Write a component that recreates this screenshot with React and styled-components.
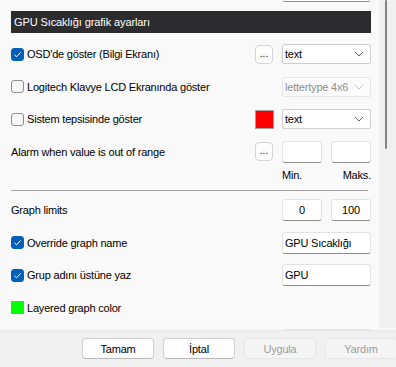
import React from 'react'
import styled, { createGlobalStyle } from 'styled-components'

const GlobalStyle = createGlobalStyle`
  html, body { margin: 0; padding: 0; }
  body {
    width: 396px;
    height: 367px;
    overflow: hidden;
    background: #f9f9f9;
    font-family: "Liberation Sans", Arial, sans-serif;
    font-size: 11px;
    letter-spacing: -0.2px;
    color: #000;
  }
`

const Window = styled.div`
  width: 396px;
  height: 367px;
  display: flex;
  flex-direction: column;
`

const ScrollArea = styled.div`
  height: 330px;
  flex: none;
  display: flex;
  overflow: hidden;
`

const Content = styled.div`
  width: 360px;
  flex: none;
  padding-left: 11px;
  margin-top: -20px;
  display: flex;
  flex-direction: column;
`

const Track = styled.div`
  margin-left: 8px;
  width: 17px;
  height: 328px;
  background: #f0f0f0;
  position: relative;
`

const Thumb = styled.div`
  position: absolute;
  left: 6px;
  top: 0;
  width: 2px;
  height: 149px;
  border-radius: 1px;
  background: #858585;
`

const Header = styled.div`
  flex: none;
  height: 22px;
  margin-top: 9px;
  margin-bottom: 4.75px;
  background: #2c2c2f;
  color: #fff;
  font-size: 11px;
  letter-spacing: -0.1px;
  display: flex;
  align-items: center;
  padding-left: 3px;
`

const Row = styled.div`
  flex: none;
  height: ${p => p.$h || 32.5}px;
  display: grid;
  grid-template-columns: 1fr 18px 89px;
  column-gap: 9px;
  align-items: center;
`

const Label = styled.label`
  display: flex;
  align-items: center;
  gap: 3px;
  white-space: nowrap;
  grid-column: 1;
`

const Box = styled.span`
  width: 13px;
  height: 13px;
  box-sizing: border-box;
  border-radius: 3px;
  display: inline-flex;
  align-items: center;
  justify-content: center;
  background: ${p => p.$checked ? '#005fb8' : '#f7f7f7'};
  border: 1px solid ${p => p.$checked ? '#005fb8' : '#8d8d8d'};
`

const Swatch = styled.span`
  grid-column: ${p => p.$col || 'auto'};
  width: ${p => p.$size || 13}px;
  height: ${p => p.$size || 13}px;
  background: ${p => p.$color};
  box-sizing: border-box;
  border: 1px solid ${p => p.$border || 'transparent'};
`

const Dots = styled.button`
  grid-column: 2;
  width: 18px;
  height: 19px;
  padding: 0 0 4px;
  border: 1px solid #d5d5d5;
  border-radius: 4px;
  background: #fdfdfd;
  color: #000;
  font: inherit;
  font-size: 10px;
  line-height: 10px;
  display: flex;
  align-items: flex-end;
  justify-content: center;
`

const Select = styled.div`
  grid-column: 3;
  height: 20px;
  box-sizing: border-box;
  border: 1px solid ${p => p.$disabled ? '#e6e6e6' : '#cfcfcf'};
  border-radius: 2px;
  background: ${p => p.$disabled ? '#fbfbfb' : '#fff'};
  color: ${p => p.$disabled ? '#8f8f8f' : '#000'};
  display: flex;
  align-items: center;
  justify-content: space-between;
  padding: 0 6px 0 2px;
  white-space: nowrap;
`

const Input = styled.div`
  grid-column: ${p => p.$col || 'auto'};
  height: 22px;
  box-sizing: border-box;
  border: 1px solid #e3e3e3;
  border-bottom-color: #8c8c8c;
  border-radius: 3px;
  background: #fff;
  display: flex;
  align-items: center;
  justify-content: ${p => p.$center ? 'center' : 'flex-start'};
  padding: 0 2px;
  white-space: nowrap;
`

const Pair = styled.div`
  grid-column: 3;
  display: grid;
  grid-template-columns: 40px 40px;
  column-gap: 9px;
`

const Captions = styled.div`
  grid-column: 3;
  display: flex;
  justify-content: space-between;
`

const Separator = styled.div`
  flex: none;
  height: 1px;
  background: #a0a0a0;
  margin: 8px 3px 3px 0;
`

const Bottom = styled.div`
  flex: 1;
  border-top: 1px solid #e8e8e8;
  background: #f0f0f0;
  display: flex;
  align-items: center;
  gap: 9px;
  padding-left: 82px;
  overflow: hidden;
`

const Button = styled.button`
  flex: none;
  width: 72px;
  height: 21px;
  border-radius: 4px;
  border: 1px solid ${p => p.$disabled ? '#e8e8e8' : '#d0d0d0'};
  border-bottom-color: ${p => p.$disabled ? '#e8e8e8' : '#b8b8b8'};
  background: ${p => p.$disabled ? '#f5f5f5' : '#fdfdfd'};
  color: ${p => p.$disabled ? '#9d9d9d' : '#000'};
  font-family: inherit;
  font-size: 11px;
  letter-spacing: -0.2px;
  padding: 0;
  margin-top: -1px;
`

const Check = () => (
  <svg width="9" height="9" viewBox="0 0 9 9">
    <path d="M1.5 4.8 L3.6 6.8 L7.6 2.4" fill="none" stroke="#fff" strokeWidth="1" />
  </svg>
)

const Chevron = ({ color }) => (
  <svg width="10" height="6" viewBox="0 0 10 6">
    <path d="M1 1 L5 5 L9 1" fill="none" stroke={color || '#606060'} strokeWidth="1" />
  </svg>
)

const CheckItem = ({ checked, children }) => (
  <Label>
    <Box $checked={checked}>{checked && <Check />}</Box>
    {children}
  </Label>
)

const App = () => {
  return (
    <Window>
      <GlobalStyle />
      <ScrollArea>
        <Content>
          <Row $h={22}>
            <Input $col={3} />
          </Row>
          <Header>GPU Sıcaklığı grafik ayarları</Header>

          <Row>
            <CheckItem checked>OSD'de göster (Bilgi Ekranı)</CheckItem>
            <Dots>...</Dots>
            <Select>text<Chevron /></Select>
          </Row>
          <Row>
            <CheckItem>Logitech Klavye LCD Ekranında göster</CheckItem>
            <Select $disabled>lettertype 4x6<Chevron color="#c4c4c4" /></Select>
          </Row>
          <Row>
            <CheckItem>Sistem tepsisinde göster</CheckItem>
            <Swatch $col={2} $color="#ff0000" $size={19} $border="#a0a0a0" />
            <Select>text<Chevron /></Select>
          </Row>
          <Row>
            <Label>Alarm when value is out of range</Label>
            <Dots>...</Dots>
            <Pair>
              <Input />
              <Input />
            </Pair>
          </Row>
          <Row $h={14}>
            <Captions>
              <span>Min.</span>
              <span>Maks.</span>
            </Captions>
          </Row>

          <Separator />

          <Row>
            <Label>Graph limits</Label>
            <Pair>
              <Input $center>0</Input>
              <Input $center>100</Input>
            </Pair>
          </Row>
          <Row>
            <CheckItem checked>Override graph name</CheckItem>
            <Input $col={3}>GPU Sıcaklığı</Input>
          </Row>
          <Row>
            <CheckItem checked>Grup adını üstüne yaz</CheckItem>
            <Input $col={3}>GPU</Input>
          </Row>
          <Row>
            <Label>
              <Swatch $color="#00ff00" />
              Layered graph color
            </Label>
          </Row>
          <Row>
            <Input $col={3} />
          </Row>
        </Content>
        <Track>
          <Thumb />
        </Track>
      </ScrollArea>
      <Bottom>
        <Button>Tamam</Button>
        <Button>İptal</Button>
        <Button $disabled>Uygula</Button>
        <Button $disabled>Yardım</Button>
      </Bottom>
    </Window>
  )
}

export default App
